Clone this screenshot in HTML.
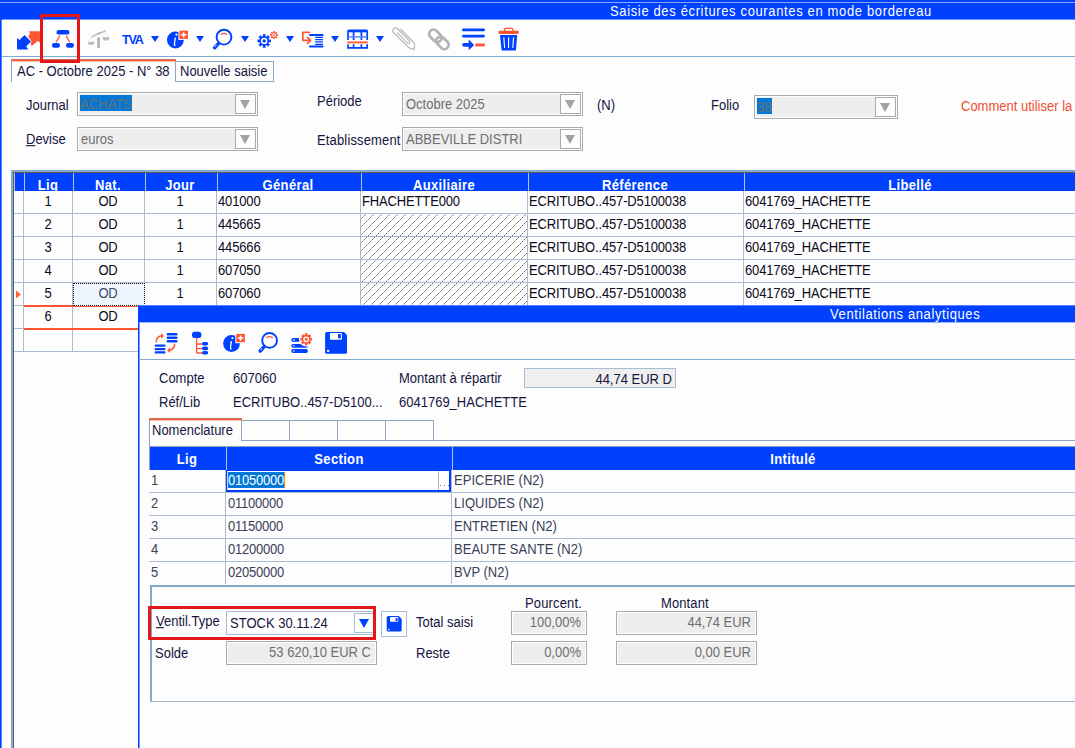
<!DOCTYPE html>
<html><head><meta charset="utf-8">
<style>
*{margin:0;padding:0;box-sizing:border-box}
html,body{width:1075px;height:748px;overflow:hidden;background:#fdfdfd}
body{position:relative;font-family:"Liberation Sans",sans-serif;font-size:13px;color:#141440}
.a{position:absolute}
.t{position:absolute;white-space:nowrap;line-height:15px;font-size:13px;transform:scaleY(1.11);transform-origin:0 12px}
.combo{position:absolute;border:1px solid #aaaaaa;background:#eeeeee;box-shadow:inset 1px 1px 0 #fff,inset -1px -1px 0 #fff}
.cbtn{position:absolute;border:1px solid #aaaaaa;background:#fdfdfd}
.tri{position:absolute;width:0;height:0;border-left:5.5px solid transparent;border-right:5.5px solid transparent;border-top:9px solid #a2a2a2}
.g{position:absolute;white-space:nowrap;line-height:15px;color:#0a0a20;letter-spacing:-0.15px;transform:scaleY(1.11);transform-origin:0 12px}
.hd{position:absolute;white-space:nowrap;line-height:15px;font-weight:bold;color:#fff;letter-spacing:0.35px;transform:scaleY(1.08);transform-origin:0 12px}
.n{position:absolute;white-space:nowrap;line-height:15px;color:#3a3f58;letter-spacing:-0.22px;transform:scaleY(1.11);transform-origin:0 12px}
svg{position:absolute;overflow:visible}
</style></head><body>

<div class="a" style="left:0px;top:0px;width:1px;height:748px;background:#0040ff;"></div>
<div class="a" style="left:1px;top:20px;width:1px;height:728px;background:#5c80ff;"></div>
<div class="a" style="left:0px;top:0px;width:1075px;height:20px;background:#0040ff;"></div>
<div class="a" style="left:0px;top:2px;width:1075px;height:1px;background:#88a8ff;"></div>
<div class="a" style="left:2px;top:19px;width:1073px;height:1px;background:#6f90ff;"></div>
<div class="t" style="left:610px;top:4px;color:#fff;letter-spacing:0.64px">Saisie des écritures courantes en mode bordereau</div>
<div class="a" style="left:2px;top:56px;width:1073px;height:1px;background:#80aad6;"></div>
<!--ICONS-->
<div class="a" style="left:11px;top:59px;width:165px;height:1px;background:#c87565;"></div>
<div class="a" style="left:11px;top:60px;width:165px;height:1px;background:#ff5a32;"></div>
<div class="a" style="left:12px;top:61px;width:163px;height:1px;background:#ffc2b2;"></div>
<div class="a" style="left:11px;top:60px;width:1px;height:22px;background:#8aa4c4;"></div>
<div class="t" style="left:17px;top:64px;color:#141440;">AC - Octobre 2025 - N° 38</div>
<div class="a" style="left:175px;top:61px;width:99px;height:21px;border:1px solid #8aa4c4"></div>
<div class="t" style="left:180px;top:64px;color:#141440;">Nouvelle saisie</div>
<div class="t" style="left:26px;top:98px;color:#141440;">Journal</div>
<div class="t" style="left:26px;top:132px;color:#141440;"><u>D</u>evise</div>
<div class="t" style="left:317px;top:94px;color:#141440;">Période</div>
<div class="t" style="left:317px;top:133px;color:#141440;letter-spacing:0.15px">Etablissement</div>
<div class="t" style="left:597px;top:98px;color:#141440;">(N)</div>
<div class="t" style="left:711px;top:98px;color:#141440;">Folio</div>
<div class="t" style="left:961px;top:99px;color:#f04e30;">Comment utiliser la</div>
<div class="combo" style="left:77px;top:92px;width:181px;height:24px"></div>
<div class="a" style="left:80px;top:95px;width:52px;height:16px;background:#0078d7;"></div>
<div class="t" style="left:80px;top:97px;color:#6e6e6e;">ACHATS</div>
<div class="cbtn" style="left:235px;top:94px;width:21px;height:20px"></div>
<div class="tri" style="left:240px;top:100px"></div>
<div class="combo" style="left:77px;top:127px;width:181px;height:24px"></div>
<div class="t" style="left:81px;top:132px;color:#6e6e6e;">euros</div>
<div class="cbtn" style="left:235px;top:129px;width:21px;height:20px"></div>
<div class="tri" style="left:240px;top:135px"></div>
<div class="combo" style="left:402px;top:92px;width:181px;height:24px"></div>
<div class="t" style="left:406px;top:97px;color:#6e6e6e;">Octobre 2025</div>
<div class="cbtn" style="left:560px;top:94px;width:21px;height:20px"></div>
<div class="tri" style="left:565px;top:100px"></div>
<div class="combo" style="left:402px;top:127px;width:181px;height:24px"></div>
<div class="t" style="left:406px;top:132px;color:#6e6e6e;">ABBEVILLE DISTRI</div>
<div class="cbtn" style="left:560px;top:129px;width:21px;height:20px"></div>
<div class="tri" style="left:565px;top:135px"></div>
<div class="combo" style="left:754px;top:95px;width:144px;height:24px"></div>
<div class="a" style="left:757px;top:98px;width:15px;height:16px;background:#0078d7;"></div>
<div class="t" style="left:757px;top:100px;color:#6e6e6e;">38</div>
<div class="cbtn" style="left:875px;top:97px;width:21px;height:20px"></div>
<div class="tri" style="left:880px;top:103px"></div>
<div class="a" style="left:11px;top:170px;width:1064px;height:1px;background:#7aaad6;"></div>
<div class="a" style="left:11px;top:170px;width:1px;height:578px;background:#7aaad6;"></div>
<div class="a" style="left:12px;top:171px;width:1063px;height:1px;background:#8ca8c2;"></div>
<div class="a" style="left:12px;top:171px;width:1px;height:577px;background:#8ca8c2;"></div>
<div class="a" style="left:13px;top:172px;width:1062px;height:1px;background:#5f5f5f;"></div>
<div class="a" style="left:13px;top:172px;width:1px;height:576px;background:#5f5f5f;"></div>
<div class="a" style="left:14px;top:173px;width:1061px;height:18px;background:#0040ff;overflow:hidden">
<div class="a" style="left:0px;top:0;width:1px;height:18px;background:#b4c4dc"></div>
<div class="a" style="left:10px;top:0;width:1px;height:18px;background:#b4c4dc"></div>
<div class="a" style="left:59px;top:0;width:1px;height:18px;background:#b4c4dc"></div>
<div class="a" style="left:131px;top:0;width:1px;height:18px;background:#b4c4dc"></div>
<div class="a" style="left:203px;top:0;width:1px;height:18px;background:#b4c4dc"></div>
<div class="a" style="left:347px;top:0;width:1px;height:18px;background:#b4c4dc"></div>
<div class="a" style="left:514px;top:0;width:1px;height:18px;background:#b4c4dc"></div>
<div class="a" style="left:730px;top:0;width:1px;height:18px;background:#b4c4dc"></div>
<div class="hd" style="left:-66px;top:5px;width:200px;text-align:center">Lig</div>
<div class="hd" style="left:-6px;top:5px;width:200px;text-align:center">Nat.</div>
<div class="hd" style="left:66px;top:5px;width:200px;text-align:center">Jour</div>
<div class="hd" style="left:174px;top:5px;width:200px;text-align:center">Général</div>
<div class="hd" style="left:330px;top:5px;width:200px;text-align:center">Auxiliaire</div>
<div class="hd" style="left:521px;top:5px;width:200px;text-align:center">Référence</div>
<div class="hd" style="left:796px;top:5px;width:200px;text-align:center">Libellé</div>
</div>
<div class="a" style="left:23px;top:191px;width:1px;height:161px;background:#a9bcd3;"></div>
<div class="a" style="left:72px;top:191px;width:1px;height:161px;background:#a9bcd3;"></div>
<div class="a" style="left:144px;top:191px;width:1px;height:161px;background:#a9bcd3;"></div>
<div class="a" style="left:216px;top:191px;width:1px;height:161px;background:#a9bcd3;"></div>
<div class="a" style="left:360px;top:191px;width:1px;height:161px;background:#a9bcd3;"></div>
<div class="a" style="left:527px;top:191px;width:1px;height:161px;background:#a9bcd3;"></div>
<div class="a" style="left:743px;top:191px;width:1px;height:161px;background:#a9bcd3;"></div>
<div class="a" style="left:14px;top:213px;width:1061px;height:1px;background:#a9bcd3;"></div>
<div class="a" style="left:14px;top:236px;width:1061px;height:1px;background:#a9bcd3;"></div>
<div class="a" style="left:14px;top:259px;width:1061px;height:1px;background:#a9bcd3;"></div>
<div class="a" style="left:14px;top:282px;width:1061px;height:1px;background:#a9bcd3;"></div>
<div class="a" style="left:14px;top:305px;width:1061px;height:1px;background:#a9bcd3;"></div>
<div class="a" style="left:14px;top:328px;width:1061px;height:1px;background:#a9bcd3;"></div>
<div class="a" style="left:14px;top:351px;width:1061px;height:1px;background:#a9bcd3;"></div>
<svg style="left:0;top:0" width="1075" height="748"><defs><pattern id="hat" patternUnits="userSpaceOnUse" x="4" y="0" width="8" height="8"><rect x="0" y="7" width="1" height="1" fill="#747474"/><rect x="1" y="6" width="1" height="1" fill="#c4c4c4"/><rect x="2" y="5" width="1" height="1" fill="#747474"/><rect x="3" y="4" width="1" height="1" fill="#c4c4c4"/><rect x="4" y="3" width="1" height="1" fill="#747474"/><rect x="5" y="2" width="1" height="1" fill="#c4c4c4"/><rect x="6" y="1" width="1" height="1" fill="#747474"/><rect x="7" y="0" width="1" height="1" fill="#c4c4c4"/></pattern></defs>
<rect x="361" y="214" width="166" height="22" fill="url(#hat)"/>
<rect x="361" y="237" width="166" height="22" fill="url(#hat)"/>
<rect x="361" y="260" width="166" height="22" fill="url(#hat)"/>
<rect x="361" y="283" width="166" height="22" fill="url(#hat)"/>
</svg>
<div class="g" style="left:28.0px;top:194px;width:40px;text-align:center;">1</div>
<div class="g" style="left:78.0px;top:194px;width:60px;text-align:center;">OD</div>
<div class="g" style="left:160.0px;top:194px;width:40px;text-align:center;">1</div>
<div class="g" style="left:218px;top:194px;">401000</div>
<div class="g" style="left:362px;top:194px;">FHACHETTE000</div>
<div class="g" style="left:529px;top:194px;">ECRITUBO..457-D5100038</div>
<div class="g" style="left:745px;top:194px;">6041769_HACHETTE</div>
<div class="g" style="left:28.0px;top:217px;width:40px;text-align:center;">2</div>
<div class="g" style="left:78.0px;top:217px;width:60px;text-align:center;">OD</div>
<div class="g" style="left:160.0px;top:217px;width:40px;text-align:center;">1</div>
<div class="g" style="left:218px;top:217px;">445665</div>
<div class="g" style="left:529px;top:217px;">ECRITUBO..457-D5100038</div>
<div class="g" style="left:745px;top:217px;">6041769_HACHETTE</div>
<div class="g" style="left:28.0px;top:240px;width:40px;text-align:center;">3</div>
<div class="g" style="left:78.0px;top:240px;width:60px;text-align:center;">OD</div>
<div class="g" style="left:160.0px;top:240px;width:40px;text-align:center;">1</div>
<div class="g" style="left:218px;top:240px;">445666</div>
<div class="g" style="left:529px;top:240px;">ECRITUBO..457-D5100038</div>
<div class="g" style="left:745px;top:240px;">6041769_HACHETTE</div>
<div class="g" style="left:28.0px;top:263px;width:40px;text-align:center;">4</div>
<div class="g" style="left:78.0px;top:263px;width:60px;text-align:center;">OD</div>
<div class="g" style="left:160.0px;top:263px;width:40px;text-align:center;">1</div>
<div class="g" style="left:218px;top:263px;">607050</div>
<div class="g" style="left:529px;top:263px;">ECRITUBO..457-D5100038</div>
<div class="g" style="left:745px;top:263px;">6041769_HACHETTE</div>
<div class="g" style="left:28.0px;top:286px;width:40px;text-align:center;">5</div>
<div class="g" style="left:160.0px;top:286px;width:40px;text-align:center;">1</div>
<div class="g" style="left:218px;top:286px;">607060</div>
<div class="g" style="left:529px;top:286px;">ECRITUBO..457-D5100038</div>
<div class="g" style="left:745px;top:286px;">6041769_HACHETTE</div>
<svg style="left:0;top:0" width="30" height="320"><path d="M16,290.5 L21,294.5 L16,298.5 Z" fill="#ff6040"/></svg>
<div class="g" style="left:28.0px;top:309px;width:40px;text-align:center;">6</div>
<div class="g" style="left:78.0px;top:309px;width:60px;text-align:center;">OD</div>
<div class="a" style="left:24px;top:305px;width:114px;height:2px;background:#ff5533;"></div>
<div class="a" style="left:24px;top:328px;width:114px;height:2px;background:#ff5533;"></div>
<div class="a" style="left:73px;top:283px;width:72px;height:23px;background:#eef5fd;border:1px dotted #111"></div>
<div class="g" style="left:78.0px;top:286px;width:60px;text-align:center;color:#3c4868;">OD</div>
<div class="a" style="left:138px;top:305px;width:937px;height:443px;background:#fdfdfd;border-left:1px solid #0040ff"></div>
<div class="a" style="left:139px;top:322px;width:1px;height:426px;background:#7896ff;"></div>
<div class="a" style="left:138px;top:306px;width:937px;height:16px;background:#0040ff;"></div>
<div class="a" style="left:139px;top:305px;width:936px;height:1px;background:#5c82ff;"></div>
<div class="a" style="left:139px;top:322px;width:936px;height:1px;background:#9cb4ff;"></div>
<div class="t" style="left:830px;top:307px;color:#fff;letter-spacing:0.6px">Ventilations analytiques</div>
<!--OICONS-->
<div class="a" style="left:139px;top:359px;width:936px;height:1px;background:#80aad6;"></div>
<div class="t" style="left:159px;top:371px;color:#141440;">Compte</div>
<div class="t" style="left:233px;top:371px;color:#141440;">607060</div>
<div class="t" style="left:399px;top:371px;color:#141440;">Montant à répartir</div>
<div class="a" style="left:524px;top:368px;width:152px;height:20px;border:1px solid #a8bcd4;background:#efefef"></div>
<div class="t" style="left:472px;top:372px;width:200px;text-align:right;color:#141440;">44,74 EUR D</div>
<div class="t" style="left:159px;top:395px;color:#141440;">Réf/Lib</div>
<div class="t" style="left:233px;top:395px;color:#141440;">ECRITUBO..457-D5100...</div>
<div class="t" style="left:399px;top:395px;color:#141440;">6041769_HACHETTE</div>
<div class="a" style="left:149px;top:418px;width:93px;height:1px;background:#c87565;"></div>
<div class="a" style="left:149px;top:419px;width:93px;height:1px;background:#ff5a32;"></div>
<div class="a" style="left:150px;top:420px;width:91px;height:1px;background:#ffc2b2;"></div>
<div class="a" style="left:149px;top:420px;width:1px;height:50px;background:#8ea4bc;"></div>
<div class="t" style="left:152px;top:423px;color:#141440;">Nomenclature</div>
<div class="a" style="left:241px;top:420px;width:49px;height:21px;border:1px solid #8ea4bc"></div>
<div class="a" style="left:289px;top:420px;width:49px;height:21px;border:1px solid #8ea4bc"></div>
<div class="a" style="left:337px;top:420px;width:49px;height:21px;border:1px solid #8ea4bc"></div>
<div class="a" style="left:385px;top:420px;width:49px;height:21px;border:1px solid #8ea4bc"></div>
<div class="a" style="left:433px;top:440px;width:642px;height:1px;background:#8ea4bc;"></div>
<div class="a" style="left:149px;top:446px;width:926px;height:1px;background:#8ea2b8;"></div>
<div class="a" style="left:150px;top:447px;width:925px;height:23px;background:#0040ff;"></div>
<div class="a" style="left:226px;top:447px;width:1px;height:23px;background:#b4c4dc;"></div>
<div class="a" style="left:452px;top:447px;width:1px;height:23px;background:#b4c4dc;"></div>
<div class="hd" style="left:87px;top:452px;width:200px;text-align:center">Lig</div>
<div class="hd" style="left:239px;top:452px;width:200px;text-align:center">Section</div>
<div class="hd" style="left:693px;top:452px;width:200px;text-align:center">Intitulé</div>
<div class="a" style="left:225px;top:470px;width:1px;height:114px;background:#a9bcd3;"></div>
<div class="a" style="left:451px;top:470px;width:1px;height:114px;background:#a9bcd3;"></div>
<div class="a" style="left:149px;top:492px;width:926px;height:1px;background:#a9bcd3;"></div>
<div class="a" style="left:149px;top:515px;width:926px;height:1px;background:#a9bcd3;"></div>
<div class="a" style="left:149px;top:538px;width:926px;height:1px;background:#a9bcd3;"></div>
<div class="a" style="left:149px;top:561px;width:926px;height:1px;background:#a9bcd3;"></div>
<div class="n" style="left:151px;top:473px;">1</div>
<div class="n" style="left:454px;top:473px;letter-spacing:0.03px">EPICERIE (N2)</div>
<div class="n" style="left:151px;top:496px;">2</div>
<div class="n" style="left:228px;top:496px;">01100000</div>
<div class="n" style="left:454px;top:496px;letter-spacing:0.03px">LIQUIDES (N2)</div>
<div class="n" style="left:151px;top:519px;">3</div>
<div class="n" style="left:228px;top:519px;">01150000</div>
<div class="n" style="left:454px;top:519px;letter-spacing:0.03px">ENTRETIEN (N2)</div>
<div class="n" style="left:151px;top:542px;">4</div>
<div class="n" style="left:228px;top:542px;">01200000</div>
<div class="n" style="left:454px;top:542px;letter-spacing:0.03px">BEAUTE SANTE (N2)</div>
<div class="n" style="left:151px;top:565px;">5</div>
<div class="n" style="left:228px;top:565px;">02050000</div>
<div class="n" style="left:454px;top:565px;letter-spacing:0.03px">BVP (N2)</div>
<div class="a" style="left:226px;top:470px;width:225px;height:22px;background:#fff;border-left:1px solid #0040ff;border-right:2px solid #0040ff;border-bottom:2px solid #0040ff"></div>
<div class="a" style="left:226px;top:470px;width:225px;height:1px;background:#0040ff;"></div>
<div class="a" style="left:227px;top:471px;width:1px;height:19px;background:#c8d4e4;"></div>
<div class="a" style="left:228px;top:472px;width:57px;height:16px;background:#0078d7;"></div>
<div class="a" style="left:284px;top:472px;width:1px;height:16px;background:#ff8800;"></div>
<div class="n" style="left:228px;top:473px;color:#fff;">01050000</div>
<div class="a" style="left:438px;top:471px;width:1px;height:19px;background:#a8b8c8;"></div>
<div class="a" style="left:440px;top:485px;width:1px;height:1px;background:#9a6a8a;"></div>
<div class="a" style="left:444px;top:485px;width:1px;height:1px;background:#9a6a8a;"></div>
<div class="a" style="left:448px;top:485px;width:1px;height:1px;background:#9a6a8a;"></div>
<div class="a" style="left:150px;top:585px;width:925px;height:1px;background:#8ea6be;"></div>
<div class="a" style="left:150px;top:585px;width:1px;height:117px;background:#8ea6be;"></div>
<div class="a" style="left:151px;top:586px;width:924px;height:1px;background:#7aa8d8;"></div>
<div class="a" style="left:151px;top:586px;width:1px;height:115px;background:#7aa8d8;"></div>
<div class="a" style="left:150px;top:701px;width:925px;height:1px;background:#a2b6ca;"></div>
<div class="t" style="left:525px;top:596px;color:#141440;letter-spacing:0.15px">Pourcent.</div>
<div class="t" style="left:661px;top:596px;color:#141440;letter-spacing:0.1px">Montant</div>
<div class="t" style="left:156px;top:614px;color:#141440;"><u>V</u>entil.Type</div>
<div class="a" style="left:226px;top:611px;width:148px;height:24px;border:1px solid #a8bcd4;background:#fff"></div>
<div class="t" style="left:230px;top:616px;color:#141440;">STOCK 30.11.24</div>
<div class="a" style="left:354px;top:613px;width:20px;height:20px;border:1px solid #a8bcd4;background:#fff"></div>
<div class="a" style="left:359px;top:619px;width:0;height:0;border-left:5.5px solid transparent;border-right:5.5px solid transparent;border-top:9px solid #0040ff"></div>
<div class="a" style="left:381px;top:611px;width:26px;height:26px;border:1px solid #a8bcd4;background:#fff"></div>
<!--FLOPPY2-->
<div class="t" style="left:416px;top:615px;color:#141440;">Total saisi</div>
<div class="combo" style="left:511px;top:611px;width:76px;height:24px"></div>
<div class="t" style="left:381px;top:615px;width:200px;text-align:right;color:#6e6e6e;">100,00%</div>
<div class="combo" style="left:616px;top:611px;width:141px;height:24px"></div>
<div class="t" style="left:551px;top:615px;width:200px;text-align:right;color:#6e6e6e;">44,74 EUR</div>
<div class="t" style="left:155px;top:646px;color:#141440;">Solde</div>
<div class="combo" style="left:226px;top:641px;width:151px;height:24px"></div>
<div class="t" style="left:171px;top:645px;width:200px;text-align:right;color:#6e6e6e;">53 620,10 EUR C</div>
<div class="t" style="left:416px;top:646px;color:#141440;">Reste</div>
<div class="combo" style="left:511px;top:641px;width:76px;height:24px"></div>
<div class="t" style="left:381px;top:645px;width:200px;text-align:right;color:#6e6e6e;">0,00%</div>
<div class="combo" style="left:616px;top:641px;width:141px;height:24px"></div>
<div class="t" style="left:551px;top:645px;width:200px;text-align:right;color:#6e6e6e;">0,00 EUR</div>
<div class="a" style="left:148px;top:606px;width:228px;height:34px;border:3px solid #e31717"></div>
<svg style="left:0;top:0" width="1075" height="748">
<path d="M17,49.6 L17,38 L19.5,40 L24.5,35 L31,41.4 L26.2,46.4 L28.2,49.6 Z" fill="#0040ff"/>
<path d="M28.8,31.2 L40,31.2 L40,42.5 L37.5,40.9 L32.1,45.8 L30.3,44.2 L31.6,41.2 L28.2,36.4 L30.1,33.8 Z" fill="#ff5533"/>
<rect x="56.5" y="30" width="13" height="4.6" rx="2.2" fill="#0040ff"/>
<rect x="52" y="43" width="8" height="4.7" rx="2.2" fill="#0040ff"/>
<rect x="66" y="43" width="8" height="4.7" rx="2.2" fill="#0040ff"/>
<path d="M59.8,35.6 L56.2,42.2 M66,35.6 L69.8,42.2" stroke="#ff5533" stroke-width="1.3"/>
<path d="M91.4,37 L98.5,33.6 L105.8,30.8" stroke="#c2c2c2" stroke-width="1.7" fill="none"/>
<circle cx="98.6" cy="33.6" r="1.2" fill="#bcbcbc"/>
<rect x="97.2" y="37.5" width="2.8" height="10.4" fill="#b2b2b2"/>
<path d="M87.6,42 H94.6 L93.4,44.8 H88.8 Z" fill="#bababa"/>
<path d="M102.4,37.2 H109.6 L108.4,40.4 H103.6 Z" fill="#bababa"/>
<path d="M88.5,41.8 L91.4,37.6 L94,41.8 M103,37 L105.8,31.8 L108.8,37" stroke="#e6e6e6" stroke-width="0.6" fill="none"/>
<text x="122" y="44" font-family="Liberation Sans" font-weight="bold" font-size="12.6" fill="#0040ff" letter-spacing="-1.2">TVA</text>
<path d="M151,36 L159,36 L155,42 Z" fill="#0040ff"/>
<path d="M196,36 L204,36 L200,42 Z" fill="#0040ff"/>
<path d="M241,36 L249,36 L245,42 Z" fill="#0040ff"/>
<path d="M286,36 L294,36 L290,42 Z" fill="#0040ff"/>
<path d="M331,36 L339,36 L335,42 Z" fill="#0040ff"/>
<path d="M376,36 L384,36 L380,42 Z" fill="#0040ff"/>
<circle cx="175.4" cy="40" r="8.4" fill="#0040ff"/><rect x="178.4" y="29.6" width="10.6" height="10.3" fill="#fff"/><rect x="179.4" y="30.6" width="8.6" height="8.3" fill="#ff5533"/><path d="M183.70000000000002,32.2 V37.4 M181.0,34.75 H186.4" stroke="#fff" stroke-width="1.6"/><circle cx="176.4" cy="34.6" r="1.1" fill="#fff"/><path d="M174.5,37.8 L176.0,37.6 Q175.20000000000002,42 175.1,44.2 Q175.20000000000002,45.6 176.0,45.6 L174.4,46.2 Q173.5,45.6 173.9,43.2 Q174.4,40 174.5,37.8 Z" fill="#fff"/>
<circle cx="224" cy="37.2" r="7.4" fill="none" stroke="#0040ff" stroke-width="1.9"/><path d="M220.4,34.6 Q224,32.2 227.4,34.6" fill="none" stroke="#ff5533" stroke-width="1.1"/><path d="M218.4,43.6 L214.6,47.800000000000004" stroke="#0040ff" stroke-width="3.4" stroke-linecap="round"/><path d="M216.4,44.800000000000004 L215,47.0" stroke="#fff" stroke-width="0.8"/>
<path d="M262.29,36.28 L263.11,36.02 L262.69,34.17 L265.71,34.17 L265.29,36.02 L266.11,36.28 L266.88,36.68 L267.90,35.07 L270.03,37.20 L268.42,38.22 L268.82,38.99 L269.08,39.81 L270.93,39.39 L270.93,42.41 L269.08,41.99 L268.82,42.81 L268.42,43.58 L270.03,44.60 L267.90,46.73 L266.88,45.12 L266.11,45.52 L265.29,45.78 L265.71,47.63 L262.69,47.63 L263.11,45.78 L262.29,45.52 L261.52,45.12 L260.50,46.73 L258.37,44.60 L259.98,43.58 L259.58,42.81 L259.32,41.99 L257.47,42.41 L257.47,39.39 L259.32,39.81 L259.58,38.99 L259.98,38.22 L258.37,37.20 L260.50,35.07 L261.52,36.68 Z" fill="#0040ff"/><circle cx="264.2" cy="40.9" r="3.2" fill="#fff"/><circle cx="264.2" cy="40.9" r="1.7" fill="#0040ff"/>
<path d="M272.85,32.33 L273.35,32.17 L273.11,31.10 L274.89,31.10 L274.65,32.17 L275.15,32.33 L275.61,32.57 L276.20,31.64 L277.46,32.90 L276.53,33.49 L276.77,33.95 L276.93,34.45 L278.00,34.21 L278.00,35.99 L276.93,35.75 L276.77,36.25 L276.53,36.71 L277.46,37.30 L276.20,38.56 L275.61,37.63 L275.15,37.87 L274.65,38.03 L274.89,39.10 L273.11,39.10 L273.35,38.03 L272.85,37.87 L272.39,37.63 L271.80,38.56 L270.54,37.30 L271.47,36.71 L271.23,36.25 L271.07,35.75 L270.00,35.99 L270.00,34.21 L271.07,34.45 L271.23,33.95 L271.47,33.49 L270.54,32.90 L271.80,31.64 L272.39,32.57 Z" fill="#ff5533"/><circle cx="274" cy="35.1" r="1.9" fill="#fff"/><circle cx="274" cy="35.1" r="0.9" fill="#ff5533"/>
<path d="M309.4,32.3 H302.8 V40.3 H310.4 M307.6,37.4 L310.6,40.3 L307.6,43.4" stroke="#ff5533" stroke-width="1.7" fill="none" stroke-linecap="round" stroke-linejoin="round"/>
<path d="M310,34.9 H322.6 M310,46.6 H322.6" stroke="#0040ff" stroke-width="2" stroke-linecap="round"/>
<path d="M315.6,37.3 H322.6 M315.6,39.6 H322.6 M315.6,41.9 H322.6 M315.6,44.3 H322.6" stroke="#0040ff" stroke-width="1.2" stroke-linecap="round"/>
<path d="M348,40 V31.2 Q348,30.4 349,30.4 H366.4 Q367.2,30.4 367.2,31.2 V40 M353.6,31 V40 M361.4,31 V40" stroke="#0040ff" stroke-width="1.7" fill="none"/>
<path d="M348,31.4 H367" stroke="#0040ff" stroke-width="1.8"/>
<path d="M348,36.9 H367" stroke="#5a86ff" stroke-width="1.5"/>
<path d="M347.2,42.4 H367.8" stroke="#ff5533" stroke-width="1.8"/>
<path d="M348,44.3 V47.8 H367.2 V44.3 M353.6,44.3 V47.8 M361.4,44.3 V47.8" stroke="#0040ff" stroke-width="1.7" fill="none"/>
<path d="M400.5,29 L413.6,42.4 Q415.2,44 414.6,46.4 L413.8,49.6 L410.6,48.4 Q408.6,47.6 407.4,46.4 L393.6,32.6 Q391.6,30.4 393.8,28.6 Q395.8,27 397.8,29 L409.4,40.8 Q410.6,42.2 409.4,43.2 Q408.2,44 407,42.8 L397,32.6" stroke="#b2b2b2" stroke-width="1.1" fill="none" stroke-linejoin="round"/>
<g transform="rotate(-45 438.9 39.4)"><rect x="434.6" y="27.4" width="8.6" height="14" rx="4.3" fill="none" stroke="#b2b2b2" stroke-width="2.7"/><rect x="434.6" y="37.4" width="8.6" height="14" rx="4.3" fill="none" stroke="#b2b2b2" stroke-width="2.7"/></g>
<path d="M463.4,29.9 H483.6 M463.4,36.1 H483.6" stroke="#0040ff" stroke-width="2.7" stroke-linecap="round"/>
<path d="M462.2,44.8 Q462.2,42.9 464,42.9 H468.7 V39.6 L474.1,45 L468.7,50.2 V46.7 H464 Q462.2,46.7 462.2,44.8 Z" fill="#0040ff"/>
<rect x="475.3" y="43.5" width="9.5" height="2.9" fill="#ff5533"/>
<path d="M504.6,31 V29.2 Q504.6,28.3 505.5,28.3 H511.9 Q512.8,28.3 512.8,29.2 V31" stroke="#ff5533" stroke-width="1.3" fill="none"/>
<rect x="498.5" y="30.7" width="20.2" height="3.3" rx="1" fill="#ff5533"/>
<path d="M500,35 H517.2 L516,49.4 Q515.9,50.6 514.6,50.6 H502.9 Q501.6,50.6 501.5,49.4 Z" fill="#0040ff"/>
<path d="M503.8,37.2 L504.6,47.9 M508.6,37.2 V47.9 M513.6,37.2 L512.8,47.9" stroke="#fff" stroke-width="1.1"/>
<path d="M167.8,334.2 H176.4 M167.8,337.7 H176.4 M167.8,341.2 H176.4" stroke="#0040ff" stroke-width="2.4" stroke-linecap="round"/>
<path d="M155.8,345.6 H164.4 M155.8,349.1 H164.4 M155.8,352.4 H164.4" stroke="#0040ff" stroke-width="2.4" stroke-linecap="round"/>
<path d="M156.2,342.2 Q156,336.6 161.8,335.8" stroke="#ff5533" stroke-width="1.5" fill="none"/><path d="M161,333 L164,336 L161,338.6 Z" fill="#ff5533"/>
<path d="M174.6,343.8 Q174.8,349.4 169.2,350.2" stroke="#ff5533" stroke-width="1.5" fill="none"/><path d="M170,347.4 L167,350.2 L170,353 Z" fill="#ff5533"/>
<rect x="192" y="331.8" width="9.4" height="6.2" rx="2.8" fill="#0040ff"/>
<path d="M196.6,338 V353 M196.6,344 H202.4 M196.6,348.6 H202.4 M196.6,353 H202.4" stroke="#ff5533" stroke-width="1.3" fill="none"/>
<rect x="202" y="342" width="6.2" height="3.6" rx="1.8" fill="#0040ff"/><rect x="202" y="346.6" width="6.2" height="3.6" rx="1.8" fill="#0040ff"/><rect x="202" y="351" width="6.2" height="3.6" rx="1.8" fill="#0040ff"/>
<circle cx="231.5" cy="343.5" r="8.4" fill="#0040ff"/><rect x="235.3" y="332.9" width="10.6" height="10.3" fill="#fff"/><rect x="236.3" y="333.9" width="8.6" height="8.3" fill="#ff5533"/><path d="M240.60000000000002,335.5 V340.7 M237.9,338.04999999999995 H243.3" stroke="#fff" stroke-width="1.6"/><circle cx="232.5" cy="338.1" r="1.1" fill="#fff"/><path d="M230.6,341.3 L232.1,341.1 Q231.3,345.5 231.2,347.7 Q231.3,349.1 232.1,349.1 L230.5,349.7 Q229.6,349.1 230.0,346.7 Q230.5,343.5 230.6,341.3 Z" fill="#fff"/>
<circle cx="269.6" cy="340.4" r="7.4" fill="none" stroke="#0040ff" stroke-width="1.9"/><path d="M266.0,337.79999999999995 Q269.6,335.4 273.0,337.79999999999995" fill="none" stroke="#ff5533" stroke-width="1.1"/><path d="M264.0,346.79999999999995 L260.20000000000005,351.0" stroke="#0040ff" stroke-width="3.4" stroke-linecap="round"/><path d="M262.0,348.0 L260.6,350.2" stroke="#fff" stroke-width="0.8"/>
<path d="M293.2,339.9 H306 M293.2,345.8 H306 M293.2,351 H306" stroke="#0040ff" stroke-width="3.8" stroke-linecap="round"/>
<circle cx="293.9" cy="339.9" r="0.8" fill="#fff"/><circle cx="293.9" cy="345.8" r="0.8" fill="#fff"/><circle cx="293.9" cy="351" r="0.8" fill="#fff"/>
<circle cx="306.2" cy="339.3" r="7.2" fill="#fff"/>
<path d="M304.44,335.05 L305.11,334.83 L304.75,333.37 L307.65,333.37 L307.29,334.83 L307.96,335.05 L308.59,335.37 L309.36,334.08 L311.42,336.14 L310.13,336.91 L310.45,337.54 L310.67,338.21 L312.13,337.85 L312.13,340.75 L310.67,340.39 L310.45,341.06 L310.13,341.69 L311.42,342.46 L309.36,344.52 L308.59,343.23 L307.96,343.55 L307.29,343.77 L307.65,345.23 L304.75,345.23 L305.11,343.77 L304.44,343.55 L303.81,343.23 L303.04,344.52 L300.98,342.46 L302.27,341.69 L301.95,341.06 L301.73,340.39 L300.27,340.75 L300.27,337.85 L301.73,338.21 L301.95,337.54 L302.27,336.91 L300.98,336.14 L303.04,334.08 L303.81,335.37 Z" fill="#ff5533"/><circle cx="306.2" cy="339.3" r="2.9" fill="#fff"/><circle cx="306.2" cy="339.3" r="1.5" fill="#ff5533"/>
<path d="M326.6,332 H344.0 L347.0,335 V352.3 Q347.0,353.8 345.5,353.8 H326.6 Q325.1,353.8 325.1,352.3 V333.5 Q325.1,332 326.6,332 Z" fill="#0040ff"/><rect x="329.918" y="333" width="12.045" height="6.758" rx="1" fill="#fff"/><rect x="338.021" y="334" width="2.847" height="4.36" fill="#0040ff"/><rect x="327.071" y="349.876" width="2.19" height="1.962" fill="#fff"/>
<path d="M388.2,616 H398.7 L401.7,619 V630.1 Q401.7,631.6 400.2,631.6 H388.2 Q386.7,631.6 386.7,630.1 V617.5 Q386.7,616 388.2,616 Z" fill="#0040ff"/><rect x="390.0" y="617" width="8.25" height="4.836" rx="1" fill="#fff"/><rect x="395.55" y="618" width="1.9500000000000002" height="3.12" fill="#0040ff"/><rect x="388.05" y="628.792" width="1.5" height="1.404" fill="#fff"/>
</svg>
<div class="a" style="left:40px;top:14px;width:40px;height:49px;border:3px solid #e31717"></div>
</body></html>
